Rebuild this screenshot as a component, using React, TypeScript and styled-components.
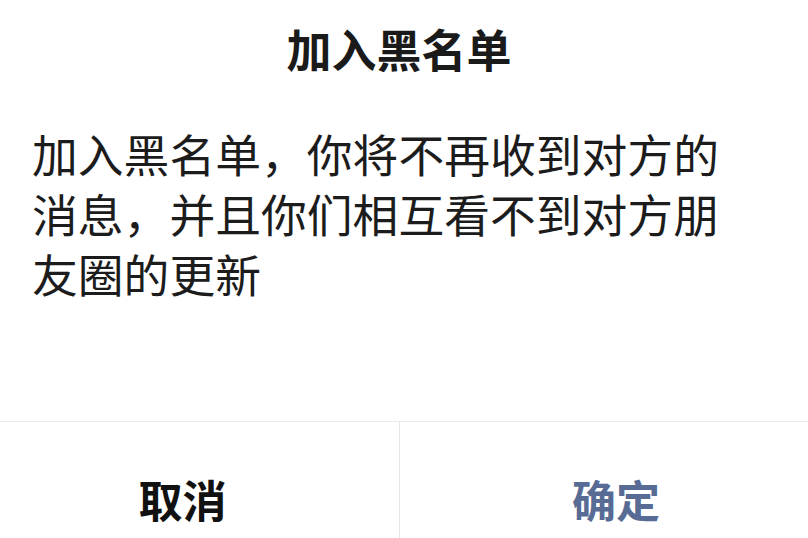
import React from "react";
import styled, { createGlobalStyle } from "styled-components";

const GlobalStyle = createGlobalStyle`
  html, body {
    margin: 0;
    padding: 0;
    background: #ffffff;
    overflow: hidden;
  }
  body {
    font-family: "Noto Sans CJK SC", "Noto Sans", sans-serif;
  }
`;

const Viewport = styled.div`
  width: 808px;
  height: 538px;
  overflow: hidden;
  background: #ffffff;
`;

// the screenshot is a crop of a wider dialog, so it hangs a bit past both edges
const Dialog = styled.div`
  width: 866px;
  margin-left: -34px;
  display: flex;
  flex-direction: column;
  background: #ffffff;
`;

const Title = styled.h1`
  margin: 0;
  padding-top: 17px;
  font-size: 45px;
  line-height: 63px;
  font-weight: 700;
  color: #1a1a1a;
  text-align: center;
`;

const Message = styled.p`
  margin: 43px 0 0 0;
  padding: 0 0 0 66px;
  max-width: 700px;
  font-size: 45.8px;
  line-height: 60px;
  font-weight: 400;
  color: #1c1c1c;
  height: 180px;
`;

const Actions = styled.div`
  margin-top: 118px;
  display: grid;
  grid-template-columns: 1fr 1fr;
  border-top: 1px solid #ebebeb;
`;

const ActionButton = styled.button<{ $primary?: boolean }>`
  height: 154px;
  border: none;
  background: transparent;
  padding: 0;
  font-family: inherit;
  font-size: 44px;
  font-weight: 700;
  color: ${(p) => (p.$primary ? "#576b95" : "#111111")};
  cursor: pointer;

  & + & {
    border-left: 1px solid #e6e6e6;
  }
`;

const App: React.FC = () => {
  return (
    <>
      <GlobalStyle />
      <Viewport>
        <Dialog>
          <Title>加入黑名单</Title>
          <Message>
            加入黑名单，你将不再收到对方的消息，并且你们相互看不到对方朋友圈的更新
          </Message>
          <Actions>
            <ActionButton>取消</ActionButton>
            <ActionButton $primary>确定</ActionButton>
          </Actions>
        </Dialog>
      </Viewport>
    </>
  );
};

export default App;
